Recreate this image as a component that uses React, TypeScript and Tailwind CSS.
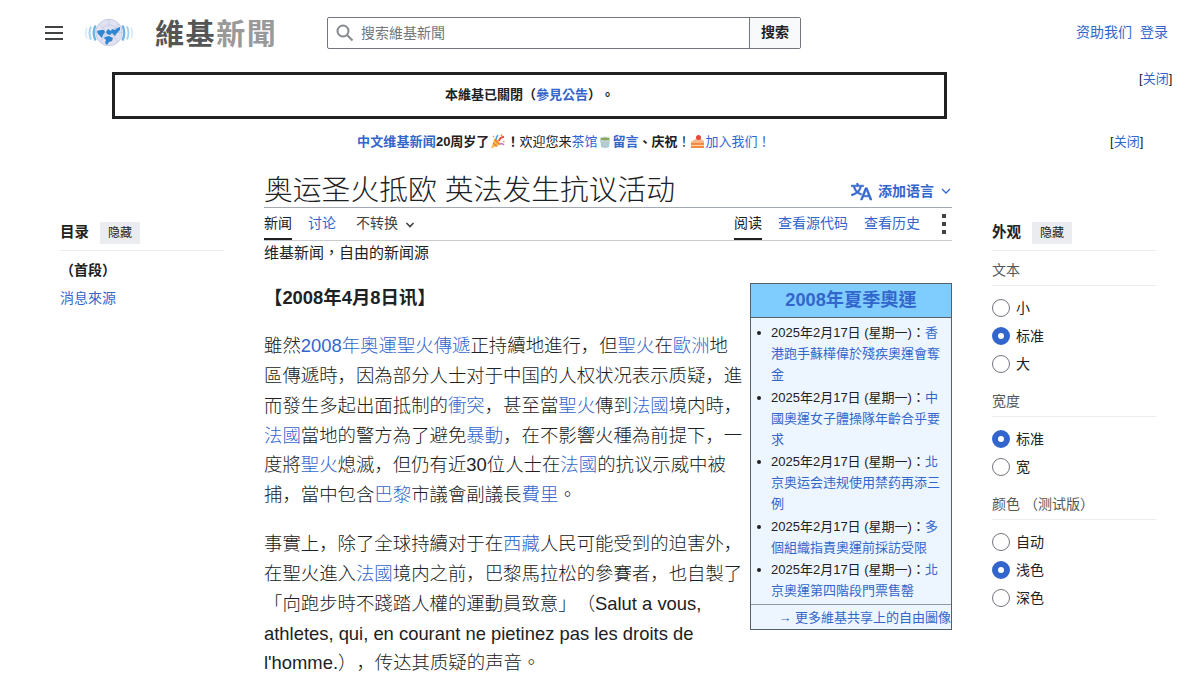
import React from 'react';

const TC = "font-['Liberation_Sans','Noto_Sans_CJK_TC',sans-serif]";

function A({ children }: { children: React.ReactNode }) {
  return <a className="text-[#3366cc]">{children}</a>;
}

function Stop() {
  return <span className={TC}>。</span>;
}

function Logo() {
  return (
    <svg className="ml-[21px] h-[32px] w-[50px] shrink-0" viewBox="0 0 50 32" fill="none">
      <g strokeWidth="2.4">
        <path d="M11.500 8.500Q8 16 11.500 23.500M38.500 8.500Q42 16 38.500 23.500" stroke="#6db4e6" />
        <path d="M7 9.500Q4 16 7 22.500M43 9.500Q46 16 43 22.500" stroke="#a4d4f2" strokeWidth="2" />
        <path d="M3 10.500Q0.500 16 3 21.500M47 10.500Q49.500 16 47 21.500" stroke="#d3ebf9" strokeWidth="1.600" />
      </g>
      <circle cx="25" cy="15.500" r="13.300" fill="#e0e2f2" stroke="#c9cde6" strokeWidth="1" />
      <g stroke="#bcc3e0" strokeWidth=".6">
        <path d="M25 2.500V10M15 7l6 6M35 7l-6 6M12 15.500h26M16 25l6-8M34 25l-6-8" />
        <ellipse cx="25" cy="13" rx="7" ry="5" />
      </g>
      <path d="M13 14l4-1 3 0 1 2-2 3-1 3-2-2-2-2zM22 15l2-3 3 2 1-2 3 1 2-2 3-1 0 3-3 3-2 3-3-3-2 2-3-1zM21 20l4-1 4 2-1 3-3 1-2 3-2-2 1-3-2-2z" fill="#2f86d2" />
    </svg>
  );
}

function Radio({ label, on }: { label: string; on?: boolean }) {
  return (
    <label className="flex h-[28px] items-center gap-[6px] text-[14px] text-[#202122]">
      <span
        className={
          on
            ? 'block size-[18px] rounded-full border-[6px] border-[#3366cc] bg-white'
            : 'block size-[18px] rounded-full border border-[#72777d] bg-white'
        }
      />
      {label}
    </label>
  );
}

function Group({ title, options, selected }: { title: string; options: string[]; selected: string }) {
  return (
    <section className="mb-[15px]">
      <h3 className="mb-[8px] flex h-[24px] items-start border-b border-[#eaecf0] text-[14px] leading-[17px] text-[#54595d]">{title}</h3>
      {options.map((o) => (
        <Radio key={o} label={o} on={o === selected} />
      ))}
    </section>
  );
}

const news: string[][] = [
  ['香', '港跑手蘇樺偉於殘疾奧運會奪', '金'],
  ['中', '國奧運女子體操隊年齡合乎要', '求'],
  ['北', '京奥运会违规使用禁药再添三', '例'],
  ['多', '個組織指責奧運前採訪受限'],
  ['北', '京奧運第四階段門票售罄'],
];

function InfoBox() {
  return (
    <aside className={`mt-[42px] h-[347px] w-[202px] shrink-0 border border-[#54616b] bg-[#edf6ff] ${TC}`}>
      <h2 className="h-[34px] border-b border-[#54616b] bg-[#7fccff] text-center text-[18.2px] font-bold leading-[32px] text-[#3366cc]">2008年夏季奧運</h2>
      <ul className="h-[286px] pl-[20px] pt-[4px] text-[13px] leading-[21px]">
        {news.map((lines, i) => (
          <li key={i} className="relative mb-[1.6px] whitespace-nowrap before:absolute before:-left-[14px] before:top-[9px] before:size-[4px] before:rounded-full before:bg-[#202122]">
            2025年2月17日 (星期一)：
            <A>
              {lines.map((l, k) => (
                <React.Fragment key={k}>
                  {k > 0 && <br />}
                  {l}
                </React.Fragment>
              ))}
            </A>
          </li>
        ))}
      </ul>
      <div className="h-[25px] whitespace-nowrap border-t border-[#8d99a3] text-right text-[13px] leading-[26px]">
        <A>→ 更多維基共享上的自由圖像</A>
      </div>
    </aside>
  );
}

function PartyIcon() {
  return (
    <svg className="mx-px inline-block size-[15px] align-[-3px]" viewBox="0 0 15 15">
      <path d="M1 14.500l3.500-10q5 1 6 6z" fill="#f7bd4a" />
      <path d="M3 9l4 3.500M4.500 5.500l5 5" stroke="#ee7a3b" strokeWidth="1.300" />
      <path d="M6 6q0-3 2-5" stroke="#4fa0e0" fill="none" strokeWidth="1.600" />
      <path d="M9 7q1-4 5-4" stroke="#e8504a" fill="none" strokeWidth="2" />
      <path d="M10 10q2-1 4 1" stroke="#c27ad6" fill="none" strokeWidth="1.600" />
      <path d="M11 .5l1 1.500M3 2l1 1M13 7.500h1.500" stroke="#f0924d" strokeWidth="1.600" />
    </svg>
  );
}

function TeaIcon() {
  return (
    <svg className="mx-px inline-block h-[15px] w-[13px] align-[-3px]" viewBox="0 0 13 15">
      <path d="M2 5h10l-1 8q-4 2-8 0z" fill="#b4ccd0" />
      <ellipse cx="7" cy="5" rx="5" ry="2" fill="#8ea55c" stroke="#c8dadd" />
    </svg>
  );
}

function CakeIcon() {
  return (
    <svg className="mx-px inline-block h-[15px] w-[13px] align-[-3px]" viewBox="0 0 13 15">
      <path d="M0 8l7-4 6 3v7H0z" fill="#f2883f" />
      <path d="M0 8l7-4 6 3v2H0z" fill="#f9b98c" />
      <path d="M0 11.500h13" stroke="#fbd0a0" strokeWidth="1.200" />
      <circle cx="7.500" cy="3.500" r="2.500" fill="#e8453c" />
    </svg>
  );
}

export default function App() {
  return (
    <div className="h-[675px] w-[1200px] overflow-hidden bg-white font-['Liberation_Sans','Noto_Sans_CJK_SC',sans-serif] text-[#202122] [text-spacing-trim:space-all]">
      <header className="flex h-[66px] items-center pl-[45px] pr-[32px]">
        <button className="flex h-[14px] w-[18px] shrink-0 flex-col justify-between">
          <span className="h-[2px] w-full bg-[#404244]" />
          <span className="h-[2px] w-full bg-[#404244]" />
          <span className="h-[2px] w-full bg-[#404244]" />
        </button>
        <Logo />
        <div className={`ml-[21px] w-[172px] shrink-0 whitespace-nowrap pt-[3px] text-[29px] font-bold leading-[40px] tracking-[1.6px] text-[#555] ${TC}`}>
          維基<span className="text-[#999]">新聞</span>
        </div>
        <form className="flex h-[32px] w-[474px] shrink-0 rounded-[2px] border border-[#72777d] text-[14px]">
          <div className="flex flex-1 items-center pl-[8px] text-[#72777d]">
            <svg className="mr-[7px] size-[18px]" viewBox="0 0 18 18" fill="none" stroke="#85898d" strokeWidth="2">
              <circle cx="7" cy="7" r="5.500" />
              <path d="M11 11l5.500 5.500" />
            </svg>
            <span className={TC}>搜索維基新聞</span>
          </div>
          <button className="w-[51px] border-l border-[#72777d] bg-[#f8f9fa] pb-px font-bold">搜索</button>
        </form>
        <nav className="ml-auto flex gap-[8px] pb-[2px] text-[14px]">
          <A>资助我们</A>
          <A>登录</A>
        </nav>
      </header>

      <div className="flex pl-[112px] pt-[6px]">
        <div className={`flex h-[47px] w-[835px] items-center justify-center border-[3px] border-[#202122] pb-px text-[13px] font-bold ${TC}`}>
          本維基已關閉（<A>參見公告</A>）。
        </div>
        <div className="ml-[192px] mt-[-3px] text-[13px] leading-[20px]">[<A>关闭</A>]</div>
      </div>
      <div className="flex h-[46px] items-center pb-px pl-[357px] text-[13px]">
        <div className="w-[753px] whitespace-nowrap leading-[20px]">
          <b><A><span className="tracking-[0.15px]">中文维基新闻</span></A>20周岁了</b><PartyIcon /><b className={TC}>！</b>欢迎您来<A>茶馆</A><TeaIcon /><b><A>留言</A><span className={TC}>、</span>庆祝</b><span className={TC}>！</span><CakeIcon /><A>加入我们<span className={TC}>！</span></A>
        </div>
        <div>[<A>关闭</A>]</div>
      </div>

      <div className="flex pl-[60px]">
        <nav className="w-[164px] pt-[57px]">
          <div className="flex h-[29px] items-start border-b border-[#eaecf0]">
            <b className="mr-[11px] text-[14.5px] leading-[21px]">目录</b>
            <button className="h-[22px] bg-[#eaecf0] px-[8px] text-[12px]">隐藏</button>
          </div>
          <div className="mt-[5px] text-[14px] font-bold leading-[28px]">（首段）</div>
          <div className={`text-[14px] leading-[28px] ${TC}`}><A>消息來源</A></div>
        </nav>

        <main className="ml-[40px] w-[688px]">
          <div className="flex h-[43px] items-end justify-between border-b border-[#a2a9b1]">
            <h1 className="relative top-px text-[28.8px] font-light leading-[36px]">奥运圣火抵欧 英法发生抗议活动</h1>
            <button className="flex h-[32px] items-center text-[14px] font-bold text-[#3366cc]">
              <svg className="mr-[6px] size-[21px]" viewBox="0 0 20 20" fill="currentColor" stroke="currentColor" strokeWidth=".6">
                <path d="M20 18h-1.440a.6.6 0 0 1-.4-.12.800.800 0 0 1-.23-.310L17 15h-5l-1 2.540a.8.800 0 0 1-.22.300.6.600 0 0 1-.4.140H9l4.550-11.470h1.890zm-3.530-4.310L14.890 9.500a12 12 0 0 1-.39-1.240q-.09.370-.19.690l-.19.560-1.580 4.190zm-6.300-1.580a13.400 13.400 0 0 1-2.910-1.410 11.460 11.460 0 0 0 2.810-5.370H12V4H7.310a4 4 0 0 0-.2-.560C6.870 2.790 6.600 2 6.600 2l-1.470.500s.400.890.600 1.500H0v1.330h2.150A11.230 11.230 0 0 0 5 10.700a17.190 17.190 0 0 1-5 2.100q.56.820.87 1.380a23.280 23.280 0 0 0 5.220-2.510 15.640 15.640 0 0 0 3.560 1.770zM3.630 5.330h4.910a8.110 8.110 0 0 1-2.450 4.450 9.110 9.110 0 0 1-2.460-4.450" />
              </svg>
              添加语言
              <svg className="ml-[7px] mr-[1px] size-[10px]" viewBox="0 0 10 10" fill="none" stroke="currentColor" strokeWidth="1.300">
                <path d="M1 3l4 4 4-4" />
              </svg>
            </button>
          </div>
          <div className="flex h-[33px] border-b border-[#c8ccd1] text-[14px] leading-[31px]">
            <span className="h-[32px] border-b-2 border-[#202122]">新闻</span>
            <span className="ml-[16px]"><A>讨论</A></span>
            <span className="ml-[20px] text-[#404244]">不转换</span>
            <svg className="ml-[7px] mt-[12px] size-[10px]" viewBox="0 0 10 10" fill="none" stroke="#404244" strokeWidth="1.600">
              <path d="M1.500 3L5 6.500 8.500 3" />
            </svg>
            <span className="ml-auto h-[32px] border-b-2 border-[#202122]">阅读</span>
            <span className="ml-[16px]"><A>查看源代码</A></span>
            <span className="ml-[16px]"><A>查看历史</A></span>
            <span className="ml-[22px] mr-[6px] flex w-[4px] flex-col gap-[4px] pt-[6px]">
              <i className="size-[4px] bg-[#404244]" />
              <i className="size-[4px] bg-[#404244]" />
              <i className="size-[4px] bg-[#404244]" />
            </span>
          </div>
          <div className="flex">
            <article className="w-[486px] shrink-0 whitespace-nowrap text-[18.4px] font-light leading-[29.750px]">
              <div className="mt-px text-[15px] font-normal leading-[22px]">维基新闻<span className={TC}>，</span>自由的新闻源</div>
              <p className="mt-[19px] font-bold">【2008年4月8日讯】</p>
              <p className="mt-[18.500px]">
                雖然<A>2008年奧運聖火傳遞</A>正持續地進行，但<A>聖火</A>在<A>歐洲</A>地<br />
                區傳遞時，因為部分人士对于中国的人权状况表示质疑，進<br />
                而發生多起出面抵制的<A>衝突</A>，甚至當<A>聖火</A>傳到<A>法國</A>境内時，<br />
                <A>法國</A>當地的警方為了避免<A>暴動</A>，在不影響火種為前提下，一<br />
                度將<A>聖火</A>熄滅，但仍有近30位人士在<A>法國</A>的抗议示威中被<br />
                捕，當中包含<A>巴黎</A>市議會副議長<A>費里</A><Stop />
              </p>
              <p className="mt-[19.500px]">
                事實上，除了全球持續对于在<A>西藏</A>人民可能受到的迫害外，<br />
                在聖火進入<A>法國</A>境内之前，巴黎馬拉松的參賽者，也自製了<br />
                「向跑步時不踐踏人權的運動員致意」（Salut a vous,<br />
                athletes, qui, en courant ne pietinez pas les droits de<br />
                l'homme.），传达其质疑的声音<Stop />
              </p>
            </article>
            <InfoBox />
          </div>
        </main>

        <aside className="ml-[40px] w-[164px] pt-[57px]">
          <div className="mb-[11px] flex h-[29px] items-start border-b border-[#eaecf0]">
            <b className="mr-[11px] text-[14.5px] leading-[21px]">外观</b>
            <button className="h-[22px] bg-[#eaecf0] px-[8px] text-[12px]">隐藏</button>
          </div>
          <Group title="文本" options={['小', '标准', '大']} selected="标准" />
          <Group title="宽度" options={['标准', '宽']} selected="标准" />
          <Group title="颜色 （测试版）" options={['自动', '浅色', '深色']} selected="浅色" />
        </aside>
      </div>
    </div>
  );
}
